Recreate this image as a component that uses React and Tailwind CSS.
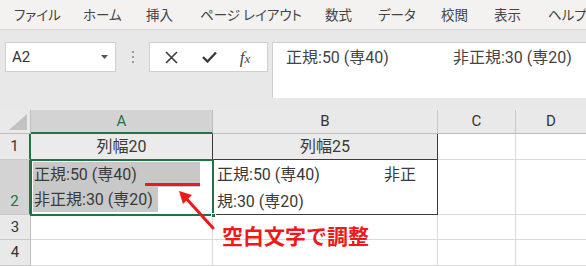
const menu = [
  { label: "ファイル", w: "w-[69px]" },
  { label: "ホーム", w: "w-[63px]" },
  { label: "挿入", w: "w-[54px]" },
  { label: "ページ レイアウト", w: "w-[125px]" },
  { label: "数式", w: "w-[53px]" },
  { label: "データ", w: "w-[63px]" },
  { label: "校閲", w: "w-[53px]" },
  { label: "表示", w: "w-[54px]" },
  { label: "ヘルプ", w: "w-[60px]" },
];

const cellFont = "font-['Roboto','Noto_Sans_CJK_JP',sans-serif] [font-feature-settings:'palt']";

function Menu() {
  return (
    <div className="h-[30px] flex items-center pl-[14px] bg-[#f3f2f1] border-b border-[#d8d8d8] text-[13.5px] text-[#444] whitespace-nowrap font-['Noto_Sans_CJK_JP',sans-serif] [font-feature-settings:'palt']">
      {menu.map((m) => (
        <div key={m.label} className={`${m.w} shrink-0`}>
          {m.label}
        </div>
      ))}
    </div>
  );
}

function FormulaRow() {
  return (
    <div className="h-[80px] bg-[#e8e8e8] flex items-start pt-[12px] pl-[5px]">
      {/* name box */}
      <div className="w-[111px] h-[30px] bg-white border border-[#cfcfcf] flex items-center justify-between pl-[6px] pr-[7px] shrink-0">
        <span className="text-[15px] text-[#333] font-['Roboto',sans-serif]">A2</span>
        <svg width="7" height="4" viewBox="0 0 7 4">
          <path d="M0 0 L7 0 L3.5 4 Z" fill="#555" />
        </svg>
      </div>
      {/* dots */}
      <div className="w-[33px] h-[30px] flex flex-col items-center justify-center gap-[3px] shrink-0">
        <span className="w-[2px] h-[2px] bg-[#9a9a9a]" />
        <span className="w-[2px] h-[2px] bg-[#9a9a9a]" />
        <span className="w-[2px] h-[2px] bg-[#9a9a9a]" />
      </div>
      {/* cancel / enter / fx */}
      <div className="w-[119px] h-[30px] bg-white border border-[#cfcfcf] flex items-center shrink-0">
        <div className="w-[42px] flex justify-center">
          <svg width="13" height="13" viewBox="0 0 13 13">
            <path d="M1 1 L12 12 M12 1 L1 12" stroke="#3c3c3c" strokeWidth="1.6" />
          </svg>
        </div>
        <div className="w-[34px] flex justify-center">
          <svg width="15" height="12" viewBox="0 0 15 12">
            <path d="M1 6 L5.5 10.5 L14 1.5" stroke="#3c3c3c" strokeWidth="2.4" fill="none" />
          </svg>
        </div>
        <div className="w-[38px] flex items-baseline justify-center italic text-[#444] font-['Liberation_Serif',serif] leading-none">
          <span className="text-[17px]">f</span>
          <span className="text-[13px]">x</span>
        </div>
      </div>
      {/* formula bar */}
      <div className={`ml-[4px] flex-1 h-[56px] bg-white border-l border-t border-[#cfcfcf] flex items-start pt-[3px] pl-[13px] text-[16px] text-[#444] whitespace-nowrap ${cellFont}`}>
        <span>正規:50 (専40)</span>
        <span className="ml-[64px]">非正規:30 (専20)</span>
      </div>
    </div>
  );
}

function ColHead({ children, active, last }) {
  return (
    <div
      className={`flex items-center justify-center text-[15px] font-['Roboto',sans-serif] ${
        active
          ? "bg-[#d3d3d3] text-[#217346] border-b-2 border-b-[#217346] border-r border-r-[#bdbdbd]"
          : "bg-[#e9e9e9] text-[#333] border-b border-b-[#bdbdbd] border-r border-r-[#c8c8c8]"
      } ${last ? "border-r-0" : ""}`}
    >
      {children}
    </div>
  );
}

function RowHead({ children, active, bottom, dark }) {
  return (
    <div
      className={`flex justify-center text-[15px] font-['Roboto',sans-serif] border-b border-b-[#c8c8c8] ${
        bottom ? "items-end pb-[2px]" : "items-center"
      } ${active ? "bg-[#d3d3d3] text-[#217346]" : "bg-[#e9e9e9] text-[#333]"} ${
        dark ? "border-r-2 border-r-[#217346]" : "border-r border-r-[#bdbdbd]"
      }`}
    >
      {children}
    </div>
  );
}

function Sheet() {
  return (
    <div className="grid grid-cols-[31px_182px_225px_78px_70px] grid-rows-[24px_26px_55px_25px_26px] text-[#3a3a3a]">
      {/* header row */}
      <div className="bg-[#e9e9e9] border-b border-b-[#bdbdbd] border-r border-r-[#bdbdbd] flex items-end justify-end p-[3px]">
        <svg width="18" height="16" viewBox="0 0 18 16">
          <path d="M18 0 L18 16 L0 16 Z" fill="#c2c2c2" />
        </svg>
      </div>
      <ColHead active>A</ColHead>
      <ColHead>B</ColHead>
      <ColHead>C</ColHead>
      <ColHead last>D</ColHead>

      {/* row 1 */}
      <RowHead dark>1</RowHead>
      <div className={`bg-[#ebebeb] border-r border-r-[#3a3a3a] flex items-center justify-center text-[16px] ${cellFont}`}>
        列幅20
      </div>
      <div className={`bg-[#ebebeb] border-r border-r-[#3a3a3a] border-b border-b-[#3a3a3a] flex items-center justify-center text-[16px] ${cellFont}`}>
        列幅25
      </div>
      <div className="border-r border-[#dadada] border-b" />
      <div className="border-b border-[#dadada]" />

      {/* row 2 */}
      <RowHead active bottom dark>2</RowHead>
      <div className={`relative bg-white text-[16px] leading-[25px] pt-[2px] pl-[2px] whitespace-nowrap ${cellFont}`}>
        <div className="w-[167px] bg-[#c8c8c8] pl-[1px]">正規:50 (専40)</div>
        <div className="w-[125px] bg-[#c8c8c8] pl-[1px]">非正規:30 (専20)</div>
        <div className="absolute -left-[1px] -top-[1px] -right-[1px] -bottom-[1px] border-2 border-[#217346]" />
        <div className="absolute -right-[3px] -bottom-[3px] w-[5px] h-[5px] bg-[#217346] border border-white" />
      </div>
      <div className={`border-r border-r-[#3a3a3a] border-b border-b-[#3a3a3a] text-[16px] leading-[27px] pt-[1px] pl-[4px] whitespace-nowrap ${cellFont}`}>
        <div className="flex">
          <span>正規:50 (専40)</span>
          <span className="ml-[64px]">非正</span>
        </div>
        <div>規:30 (専20)</div>
      </div>
      <div className="border-r border-[#dadada] border-b" />
      <div className="border-b border-[#dadada]" />

      {/* row 3 */}
      <RowHead>3</RowHead>
      <div className="border-r border-[#dadada] border-b" />
      <div className="border-r border-[#dadada] border-b" />
      <div className="border-r border-[#dadada] border-b" />
      <div className="border-b border-[#dadada]" />

      {/* row 4 */}
      <RowHead>4</RowHead>
      <div className="border-r border-[#dadada] border-b" />
      <div className="border-r border-[#dadada] border-b" />
      <div className="border-r border-[#dadada] border-b" />
      <div className="border-b border-[#dadada]" />
    </div>
  );
}

export default function App() {
  return (
    <div className="relative w-[586px] h-[266px] overflow-hidden bg-white">
      <Menu />
      <FormulaRow />
      <Sheet />

      {/* annotation */}
      <div className="absolute left-[145px] top-[183px] w-[55px] h-[3px] bg-[#f01818]" />
      <svg className="absolute left-[170px] top-[182px]" width="52" height="52" viewBox="0 0 52 52">
        <path d="M43 46 L14 14" stroke="#f01818" strokeWidth="3" strokeLinecap="round" />
        <path d="M9 9 L22 13 L13 22 Z" fill="#f01818" />
      </svg>
      <div className="absolute left-[222px] top-[221px] text-[21px] font-bold text-[#f01818] leading-[28px] font-['Noto_Sans_CJK_JP',sans-serif]">
        空白文字で調整
      </div>
    </div>
  );
}
